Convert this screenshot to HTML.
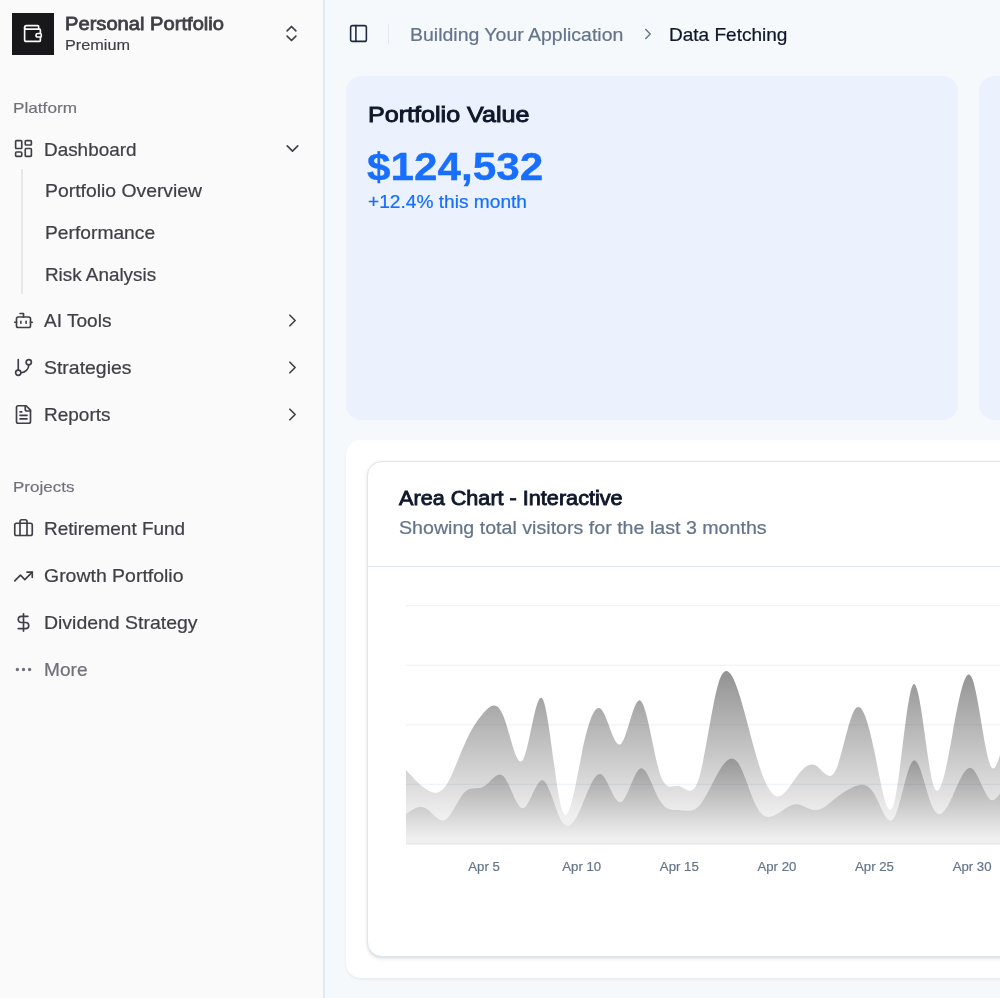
<!DOCTYPE html>
<html><head><meta charset="utf-8">
<style>
*{box-sizing:border-box;margin:0;padding:0}
html,body{width:1000px;height:998px;overflow:hidden}
body{font-family:"Liberation Sans",sans-serif;background:#f6f9fc;position:relative;color:#3f3f46}
.abs{position:absolute;white-space:nowrap;line-height:1}
#sidebar{position:absolute;left:0;top:0;width:325px;height:998px;background:#fafafa;border-right:2px solid #e5eaf2}
.t{position:absolute;white-space:nowrap;line-height:20px;height:20px}
.nav{font-size:17.6px;color:#3f3f46;left:44px}
.sub{font-size:17.6px;color:#3f3f46;left:45.5px}
.lbl{font-size:15.2px;color:#71717a;left:13px}
svg.ic{position:absolute;overflow:visible;fill:none;stroke:#3f3f46;stroke-width:1.9;stroke-linecap:round;stroke-linejoin:round}
#root{position:absolute;left:0;top:0;width:1000px;height:998px;overflow:hidden;will-change:transform}
</style></head><body><div id="root">
<div id="sidebar">
  <div class="abs" style="left:12px;top:13px;width:42px;height:42px;background:#18181b"></div>
  <svg class="ic" style="left:21.6px;top:22.5px;stroke:#fafafa" width="21" height="21" viewBox="0 0 24 24"><path d="M19 7V4a1 1 0 0 0-1-1H5a2 2 0 0 0 0 4h15a1 1 0 0 1 1 1v4h-3a2 2 0 0 0 0 4h3a1 1 0 0 0 1-1v-2a1 1 0 0 0-1-1"/><path d="M3 5v14a2 2 0 0 0 2 2h15a1 1 0 0 0 1-1v-4"/></svg>
  <svg class="ic" style="left:281px;top:23px" width="21" height="21" viewBox="0 0 24 24"><path d="m7 15 5 5 5-5"/><path d="m7 9 5-5 5 5"/></svg>
  <svg class="ic" style="left:13px;top:137.7px" width="21" height="21" viewBox="0 0 24 24"><rect width="7" height="9" x="3" y="3" rx="1"/><rect width="7" height="5" x="14" y="3" rx="1"/><rect width="7" height="9" x="14" y="12" rx="1"/><rect width="7" height="5" x="3" y="16" rx="1"/></svg>
  <svg class="ic" style="left:281.5px;top:138px" width="21" height="21" viewBox="0 0 24 24"><path d="m6 9 6 6 6-6"/></svg>
  <div class="abs" style="left:21.3px;top:168.7px;width:1.3px;height:125.5px;background:#e5e7eb"></div>

  <svg class="ic" style="left:13px;top:309.5px" width="21" height="21" viewBox="0 0 24 24"><path d="M12 8V4H8"/><rect width="16" height="12" x="4" y="8" rx="2"/><path d="M2 14h2"/><path d="M20 14h2"/><path d="M15 13v2"/><path d="M9 13v2"/></svg>
  <svg class="ic" style="left:281.5px;top:309.5px" width="21" height="21" viewBox="0 0 24 24"><path d="m9 18 6-6-6-6"/></svg>

  <svg class="ic" style="left:13px;top:356.5px" width="21" height="21" viewBox="0 0 24 24"><line x1="6" x2="6" y1="3" y2="15"/><circle cx="18" cy="6" r="3"/><circle cx="6" cy="18" r="3"/><path d="M18 9a9 9 0 0 1-9 9"/></svg>
  <svg class="ic" style="left:281.5px;top:356.5px" width="21" height="21" viewBox="0 0 24 24"><path d="m9 18 6-6-6-6"/></svg>

  <svg class="ic" style="left:13px;top:403.5px" width="21" height="21" viewBox="0 0 24 24"><path d="M15 2H6a2 2 0 0 0-2 2v16a2 2 0 0 0 2 2h12a2 2 0 0 0 2-2V7Z"/><path d="M14 2v4a2 2 0 0 0 2 2h4"/><path d="M10 9H8"/><path d="M16 13H8"/><path d="M16 17H8"/></svg>
  <svg class="ic" style="left:281.5px;top:403.5px" width="21" height="21" viewBox="0 0 24 24"><path d="m9 18 6-6-6-6"/></svg>
  <svg class="ic" style="left:13px;top:518px" width="21" height="21" viewBox="0 0 24 24"><path d="M16 20V4a2 2 0 0 0-2-2h-4a2 2 0 0 0-2 2v16"/><rect width="20" height="14" x="2" y="6" rx="2"/></svg>
  <svg class="ic" style="left:13px;top:565.7px" width="21" height="21" viewBox="0 0 24 24"><polyline points="22 7 13.5 15.5 8.5 10.5 2 17"/><polyline points="16 7 22 7 22 13"/></svg>
  <svg class="ic" style="left:13px;top:612px" width="21" height="21" viewBox="0 0 24 24"><line x1="12" x2="12" y1="2" y2="22"/><path d="M17 5H9.500a3.500 3.500 0 0 0 0 7h5a3.500 3.500 0 0 1 0 7H6"/></svg>
  <svg class="ic" style="left:13px;top:659px;stroke:#71717a" width="21" height="21" viewBox="0 0 24 24"><circle cx="12" cy="12" r="1"/><circle cx="19" cy="12" r="1"/><circle cx="5" cy="12" r="1"/></svg>
</div>

<!-- header -->
<svg class="ic" style="left:348.1px;top:23px;stroke:#1e293b;stroke-width:1.8" width="21" height="21" viewBox="0 0 24 24"><rect width="18" height="18" x="3" y="3" rx="2"/><path d="M9 3v18"/></svg>
<div class="abs" style="left:387.5px;top:23.8px;width:1.3px;height:20.4px;background:#e4e9f1"></div>
<svg class="ic" style="left:638.5px;top:24.5px;stroke:#64748b" width="18" height="18" viewBox="0 0 24 24"><path d="m9 18 6-6-6-6"/></svg>

<!-- cards -->
<div class="abs" style="left:346px;top:76px;width:612px;height:343.5px;border-radius:15px;background:#ebf2fd"></div>
<div class="abs" style="left:978.5px;top:76px;width:612px;height:343.5px;border-radius:15px;background:#ebf2fd"></div>

<!-- chart container -->
<div class="abs" style="left:346px;top:440px;width:1900px;height:538px;border-radius:15px;background:#fff;box-shadow:0 1.3px 2.6px rgba(0,0,0,.05)"></div>
<div class="abs" style="left:367px;top:461.4px;width:1860px;height:496px;border-radius:15px;background:#fff;border:1.3px solid #dfe6ef;box-shadow:0 1.3px 3.9px rgba(0,0,0,.1),0 1.3px 2.6px -1.3px rgba(0,0,0,.1)"></div>
<div class="abs" style="left:368px;top:566px;width:1860px;height:1.3px;background:#dde5ee"></div>

<svg class="abs" style="left:0;top:0" width="1000" height="998" viewBox="0 0 1000 998">
  <defs>
    <linearGradient id="gd" x1="0" y1="0" x2="0" y2="1"><stop offset="5%" stop-color="#000" stop-opacity="0.8"/><stop offset="95%" stop-color="#000" stop-opacity="0.1"/></linearGradient>
    <linearGradient id="gm" x1="0" y1="0" x2="0" y2="1"><stop offset="5%" stop-color="#000" stop-opacity="0.8"/><stop offset="95%" stop-color="#000" stop-opacity="0.1"/></linearGradient>
  </defs>
  <g stroke="#e2e8f0" stroke-opacity="0.5" stroke-width="1.3">
    <line x1="406" x2="1000" y1="605.7" y2="605.7"/>
    <line x1="406" x2="1000" y1="665.3" y2="665.3"/>
    <line x1="406" x2="1000" y1="724.8" y2="724.8"/>
    <line x1="406" x2="1000" y1="784.4" y2="784.4"/>
    <line x1="406" x2="1000" y1="844.0" y2="844.0"/>
  </g>
  <path d="M406.00,814.09C412.51,809.37,419.01,804.66,425.52,808.12C432.03,811.59,438.53,823.23,445.04,820.05C451.55,816.87,458.05,798.88,464.56,792.23C471.07,785.57,477.57,790.25,484.08,786.26C490.59,782.27,497.09,769.61,503.60,776.32C510.11,783.04,516.61,809.12,523.12,808.12C529.63,807.13,536.13,779.06,542.64,780.30C549.15,781.54,555.65,812.08,562.16,822.04C568.67,831.99,575.17,821.35,581.68,806.14C588.19,790.92,594.69,771.13,601.20,774.34C607.71,777.54,614.21,803.74,620.72,802.16C627.23,800.59,633.73,771.24,640.24,768.38C646.75,765.51,653.25,789.12,659.76,800.17C666.27,811.23,672.77,809.72,679.28,810.11C685.79,810.51,692.29,812.80,698.80,806.14C705.31,799.47,711.81,783.84,718.32,772.35C724.83,760.86,731.33,753.52,737.84,762.41C744.35,771.31,750.85,796.45,757.36,808.12C763.87,819.80,770.37,818.01,776.88,814.09C783.39,810.17,789.89,804.12,796.40,804.15C802.91,804.18,809.41,810.28,815.92,810.11C822.43,809.94,828.93,803.49,835.44,798.19C841.95,792.88,848.45,788.72,854.96,786.26C861.47,783.80,867.97,783.04,874.48,794.21C880.99,805.39,887.49,828.50,894.00,818.06C900.51,807.62,907.01,763.63,913.52,760.42C920.03,757.22,926.53,794.81,933.04,808.12C939.55,821.44,946.05,810.48,952.56,796.20C959.07,781.92,965.57,764.30,972.08,768.38C978.59,772.45,985.09,798.21,991.60,800.17C998.11,802.14,1004.61,780.30,1011.12,782.29C1017.63,784.27,1024.13,810.07,1030.64,806.14C1037.15,802.20,1043.65,768.53,1050.16,760.42C1056.67,752.32,1063.17,769.79,1069.68,766.39C1076.19,762.99,1082.69,738.72,1089.20,740.55C1095.71,742.38,1102.21,770.32,1108.72,784.27C1115.23,798.23,1121.73,798.19,1128.24,802.16C1134.75,806.13,1141.25,814.11,1147.76,808.12C1154.27,802.14,1160.77,782.18,1167.28,778.31C1173.79,774.45,1180.29,786.68,1186.80,790.24C1193.31,793.79,1199.81,788.67,1206.32,796.20C1212.83,803.73,1219.33,823.91,1225.84,812.10C1232.35,800.29,1238.85,756.50,1245.36,746.51C1251.87,736.53,1258.37,760.36,1264.88,768.38C1271.39,776.39,1277.89,768.60,1284.40,764.40C1290.91,760.20,1297.41,759.61,1303.92,760.42C1310.43,761.24,1316.93,763.48,1323.44,774.34C1329.95,785.19,1336.45,804.67,1342.96,808.12C1349.47,811.58,1355.97,799.02,1362.48,798.19C1368.99,797.35,1375.49,808.25,1382.00,816.07C1388.51,823.90,1395.01,828.66,1401.52,820.05C1408.03,811.44,1414.53,789.48,1421.04,786.26C1427.55,783.05,1434.05,798.58,1440.56,800.17C1447.07,801.77,1453.57,789.41,1460.08,794.21C1466.59,799.02,1473.09,820.98,1479.60,810.11C1486.11,799.24,1492.61,755.54,1499.12,752.47C1505.63,749.41,1512.13,786.97,1518.64,806.14C1525.15,825.30,1531.65,826.07,1538.16,818.06C1544.67,810.06,1551.17,793.29,1557.68,788.25C1564.19,783.21,1570.69,789.89,1577.20,798.19C1583.71,806.48,1590.21,816.38,1596.72,804.15C1603.23,791.92,1609.73,757.55,1616.24,762.41C1622.75,767.28,1629.25,811.37,1635.76,812.10C1642.27,812.83,1648.77,770.20,1655.28,768.38C1661.79,766.55,1668.29,805.53,1674.80,816.07C1681.31,826.62,1687.81,808.72,1694.32,794.21C1700.83,779.70,1707.33,768.57,1713.84,770.36C1720.35,772.15,1726.85,786.87,1733.36,780.30C1739.87,773.73,1746.37,745.89,1752.88,748.50C1759.39,751.11,1765.89,784.17,1772.40,804.15C1778.91,824.13,1785.41,831.03,1791.92,814.09C1798.43,797.14,1804.93,756.35,1811.44,760.42C1817.95,764.50,1824.45,813.43,1830.96,818.06C1837.47,822.70,1843.97,783.04,1850.48,768.38C1856.99,753.71,1863.49,764.03,1870.00,774.34C1876.51,784.64,1883.01,794.93,1889.52,782.29C1896.03,769.64,1902.53,734.07,1909.04,740.55C1915.55,747.03,1922.05,795.57,1928.56,810.11C1935.07,824.65,1941.57,805.20,1948.08,786.26C1954.59,767.33,1961.09,748.91,1967.60,754.46C1974.11,760.01,1980.61,789.53,1987.12,802.16C1993.63,814.79,2000.13,810.53,2006.64,790.24C2013.15,769.94,2019.65,733.62,2026.16,738.56C2032.67,743.51,2039.17,789.72,2045.68,808.12C2052.19,826.53,2058.69,817.11,2065.20,806.14C2071.71,795.16,2078.21,782.62,2084.72,768.38C2091.23,754.13,2097.73,738.16,2104.24,746.51C2110.75,754.86,2117.25,787.52,2123.76,804.15C2130.27,820.78,2136.77,821.40,2143.28,812.10C2149.79,802.80,2156.29,783.60,2162.80,764.40L2162.80,843.90L406.00,843.90Z" fill="url(#gm)" fill-opacity="0.6"/>
  <path d="M406.00,769.96C412.51,777.10,419.01,784.24,425.52,788.85C432.03,793.45,438.53,795.52,445.04,786.86C451.55,778.20,458.05,758.81,464.56,744.13C471.07,729.45,477.57,719.48,484.08,712.13C490.59,704.78,497.09,700.04,503.60,716.50C510.11,732.96,516.61,770.61,523.12,759.43C529.63,748.26,536.13,688.26,542.64,699.01C549.15,709.77,555.65,791.28,562.16,810.31C568.67,829.34,575.17,785.90,581.68,754.26C588.19,722.63,594.69,702.80,601.20,709.35C607.71,715.90,614.21,748.83,620.72,744.13C627.23,739.42,633.73,697.09,640.24,700.40C646.75,703.72,653.25,752.69,659.76,772.95C666.27,793.20,672.77,784.74,679.28,786.26C685.79,787.78,692.29,799.28,698.80,778.71C705.31,758.14,711.81,705.50,718.32,683.71C724.83,661.92,731.33,670.97,737.84,690.07C744.35,709.16,750.85,738.30,757.36,759.83C763.87,781.36,770.37,795.27,776.88,796.40C783.39,797.53,789.89,785.87,796.40,776.92C802.91,767.97,809.41,761.74,815.92,765.59C822.43,769.44,828.93,783.38,835.44,770.76C841.95,758.14,848.45,718.95,854.96,709.35C861.47,699.74,867.97,719.73,874.48,751.48C880.99,783.23,887.49,826.76,894.00,803.16C900.51,779.55,907.01,688.83,913.52,684.30C920.03,679.78,926.53,761.46,933.04,783.88C939.55,806.29,946.05,769.45,952.56,733.59C959.07,697.74,965.57,662.87,972.08,678.14C978.59,693.41,985.09,758.82,991.60,767.38C998.11,775.95,1004.61,727.67,1011.12,724.05C1017.63,720.44,1024.13,761.49,1030.64,757.05C1037.15,752.60,1043.65,702.67,1050.16,683.91C1056.67,665.14,1063.17,677.54,1069.68,670.79C1076.19,664.04,1082.69,638.14,1089.20,641.57C1095.71,645.01,1102.21,677.78,1108.72,707.16C1115.23,736.54,1121.73,762.54,1128.24,772.55C1134.75,782.55,1141.25,776.56,1147.76,763.01C1154.27,749.45,1160.77,728.34,1167.28,720.08C1173.79,711.82,1180.29,716.43,1186.80,723.66C1193.31,730.89,1199.81,740.74,1206.32,757.05C1212.83,773.35,1219.33,796.10,1225.84,772.95C1232.35,749.79,1238.85,680.74,1245.36,657.47C1251.87,634.20,1258.37,656.71,1264.88,674.37C1271.39,692.02,1277.89,704.81,1284.40,697.22C1290.91,689.63,1297.41,661.66,1303.92,661.25C1310.43,660.84,1316.93,688.00,1323.44,711.73C1329.95,735.46,1336.45,755.76,1342.96,761.42C1349.47,767.07,1355.97,758.08,1362.48,763.01C1368.99,767.94,1375.49,786.79,1382.00,799.78C1388.51,812.77,1395.01,819.89,1401.52,803.95C1408.03,788.01,1414.53,749.00,1421.04,736.18C1427.55,723.36,1434.05,736.74,1440.56,741.74C1447.07,746.75,1453.57,743.38,1460.08,754.26C1466.59,765.15,1473.09,790.28,1479.60,767.78C1486.11,745.28,1492.61,675.14,1499.12,669.00C1505.63,662.86,1512.13,720.74,1518.64,759.83C1525.15,798.92,1531.65,819.24,1538.16,802.56C1544.67,785.88,1551.17,732.21,1557.68,720.67C1564.19,709.14,1570.69,739.74,1577.20,762.81C1583.71,785.88,1590.21,801.43,1596.72,768.77C1603.23,736.12,1609.73,655.27,1616.24,669.00C1622.75,682.73,1629.25,791.06,1635.76,791.63C1642.27,792.20,1648.77,685.02,1655.28,681.12C1661.79,677.23,1668.29,776.61,1674.80,798.59C1681.31,820.56,1687.81,765.13,1694.32,735.78C1700.83,706.43,1707.33,703.17,1713.84,706.17C1720.35,709.16,1726.85,718.41,1733.36,703.78C1739.87,689.15,1746.37,650.63,1752.88,661.45C1759.39,672.27,1765.89,732.42,1772.40,773.34C1778.91,814.26,1785.41,835.95,1791.92,795.80C1798.43,755.66,1804.93,653.69,1811.44,662.64C1817.95,671.59,1824.45,791.46,1830.96,801.96C1837.47,812.47,1843.97,713.62,1850.48,683.71C1856.99,653.80,1863.49,692.82,1870.00,713.32C1876.51,733.82,1883.01,735.79,1889.52,708.55C1896.03,681.32,1902.53,624.88,1909.04,646.14C1915.55,667.40,1922.05,766.36,1928.56,788.85C1935.07,811.33,1941.57,757.35,1948.08,718.49C1954.59,679.63,1961.09,655.89,1967.60,673.37C1974.11,690.85,1980.61,749.55,1987.12,768.57C1993.63,787.59,2000.13,766.93,2006.64,727.23C2013.15,687.53,2019.65,628.79,2026.16,643.16C2032.67,657.53,2039.17,745.01,2045.68,781.89C2052.19,818.77,2058.69,805.04,2065.20,778.11C2071.71,751.18,2078.21,711.05,2084.72,682.12C2091.23,653.19,2097.73,635.47,2104.24,657.47C2110.75,679.48,2117.25,741.20,2123.76,774.54C2130.27,807.87,2136.77,812.82,2143.28,791.63C2149.79,770.43,2156.29,723.10,2162.80,675.76L2162.80,764.40C2156.29,783.60,2149.79,802.80,2143.28,812.10C2136.77,821.40,2130.27,820.78,2123.76,804.15C2117.25,787.52,2110.75,754.86,2104.24,746.51C2097.73,738.16,2091.23,754.13,2084.72,768.38C2078.21,782.62,2071.71,795.16,2065.20,806.14C2058.69,817.11,2052.19,826.53,2045.68,808.12C2039.17,789.72,2032.67,743.51,2026.16,738.56C2019.65,733.62,2013.15,769.94,2006.64,790.24C2000.13,810.53,1993.63,814.79,1987.12,802.16C1980.61,789.53,1974.11,760.01,1967.60,754.46C1961.09,748.91,1954.59,767.33,1948.08,786.26C1941.57,805.20,1935.07,824.65,1928.56,810.11C1922.05,795.57,1915.55,747.03,1909.04,740.55C1902.53,734.07,1896.03,769.64,1889.52,782.29C1883.01,794.93,1876.51,784.64,1870.00,774.34C1863.49,764.03,1856.99,753.71,1850.48,768.38C1843.97,783.04,1837.47,822.70,1830.96,818.06C1824.45,813.43,1817.95,764.50,1811.44,760.42C1804.93,756.35,1798.43,797.14,1791.92,814.09C1785.41,831.03,1778.91,824.13,1772.40,804.15C1765.89,784.17,1759.39,751.11,1752.88,748.50C1746.37,745.89,1739.87,773.73,1733.36,780.30C1726.85,786.87,1720.35,772.15,1713.84,770.36C1707.33,768.57,1700.83,779.70,1694.32,794.21C1687.81,808.72,1681.31,826.62,1674.80,816.07C1668.29,805.53,1661.79,766.55,1655.28,768.38C1648.77,770.20,1642.27,812.83,1635.76,812.10C1629.25,811.37,1622.75,767.28,1616.24,762.41C1609.73,757.55,1603.23,791.92,1596.72,804.15C1590.21,816.38,1583.71,806.48,1577.20,798.19C1570.69,789.89,1564.19,783.21,1557.68,788.25C1551.17,793.29,1544.67,810.06,1538.16,818.06C1531.65,826.07,1525.15,825.30,1518.64,806.14C1512.13,786.97,1505.63,749.41,1499.12,752.47C1492.61,755.54,1486.11,799.24,1479.60,810.11C1473.09,820.98,1466.59,799.02,1460.08,794.21C1453.57,789.41,1447.07,801.77,1440.56,800.17C1434.05,798.58,1427.55,783.05,1421.04,786.26C1414.53,789.48,1408.03,811.44,1401.52,820.05C1395.01,828.66,1388.51,823.90,1382.00,816.07C1375.49,808.25,1368.99,797.35,1362.48,798.19C1355.97,799.02,1349.47,811.58,1342.96,808.12C1336.45,804.67,1329.95,785.19,1323.44,774.34C1316.93,763.48,1310.43,761.24,1303.92,760.42C1297.41,759.61,1290.91,760.20,1284.40,764.40C1277.89,768.60,1271.39,776.39,1264.88,768.38C1258.37,760.36,1251.87,736.53,1245.36,746.51C1238.85,756.50,1232.35,800.29,1225.84,812.10C1219.33,823.91,1212.83,803.73,1206.32,796.20C1199.81,788.67,1193.31,793.79,1186.80,790.24C1180.29,786.68,1173.79,774.45,1167.28,778.31C1160.77,782.18,1154.27,802.14,1147.76,808.12C1141.25,814.11,1134.75,806.13,1128.24,802.16C1121.73,798.19,1115.23,798.23,1108.72,784.27C1102.21,770.32,1095.71,742.38,1089.20,740.55C1082.69,738.72,1076.19,762.99,1069.68,766.39C1063.17,769.79,1056.67,752.32,1050.16,760.42C1043.65,768.53,1037.15,802.20,1030.64,806.14C1024.13,810.07,1017.63,784.27,1011.12,782.29C1004.61,780.30,998.11,802.14,991.60,800.17C985.09,798.21,978.59,772.45,972.08,768.38C965.57,764.30,959.07,781.92,952.56,796.20C946.05,810.48,939.55,821.44,933.04,808.12C926.53,794.81,920.03,757.22,913.52,760.42C907.01,763.63,900.51,807.62,894.00,818.06C887.49,828.50,880.99,805.39,874.48,794.21C867.97,783.04,861.47,783.80,854.96,786.26C848.45,788.72,841.95,792.88,835.44,798.19C828.93,803.49,822.43,809.94,815.92,810.11C809.41,810.28,802.91,804.18,796.40,804.15C789.89,804.12,783.39,810.17,776.88,814.09C770.37,818.01,763.87,819.80,757.36,808.12C750.85,796.45,744.35,771.31,737.84,762.41C731.33,753.52,724.83,760.86,718.32,772.35C711.81,783.84,705.31,799.47,698.80,806.14C692.29,812.80,685.79,810.51,679.28,810.11C672.77,809.72,666.27,811.23,659.76,800.17C653.25,789.12,646.75,765.51,640.24,768.38C633.73,771.24,627.23,800.59,620.72,802.16C614.21,803.74,607.71,777.54,601.20,774.34C594.69,771.13,588.19,790.92,581.68,806.14C575.17,821.35,568.67,831.99,562.16,822.04C555.65,812.08,549.15,781.54,542.64,780.30C536.13,779.06,529.63,807.13,523.12,808.12C516.61,809.12,510.11,783.04,503.60,776.32C497.09,769.61,490.59,782.27,484.08,786.26C477.57,790.25,471.07,785.57,464.56,792.23C458.05,798.88,451.55,816.87,445.04,820.05C438.53,823.23,432.03,811.59,425.52,808.12C419.01,804.66,412.51,809.37,406.00,814.09Z" fill="url(#gd)" fill-opacity="0.6"/>
  <g font-family="Liberation Sans, sans-serif" font-size="13.2" fill="#64748b" stroke="#64748b" stroke-width="0.2" text-anchor="middle">
    <text x="484.1" y="871.3">Apr 5</text>
    <text x="581.7" y="871.3">Apr 10</text>
    <text x="679.3" y="871.3">Apr 15</text>
    <text x="776.9" y="871.3">Apr 20</text>
    <text x="874.5" y="871.3">Apr 25</text>
    <text x="972.1" y="871.3">Apr 30</text>
  </g>
</svg>
<div class="t" style="left:65px;top:11.69px;font-size:18.2px;line-height:24px;height:24px;font-weight:normal;color:#3f3f46;transform-origin:0 0;transform:scaleX(1.1075);-webkit-text-stroke:0.76px #3f3f46">Personal Portfolio</div>
<div class="t" style="left:65px;top:34.80px;font-size:15px;line-height:20px;height:20px;font-weight:normal;color:#3f3f46;transform-origin:0 0;transform:scaleX(1.0831);-webkit-text-stroke:0.18px #3f3f46">Premium</div>
<div class="t" style="left:13px;top:97.80px;font-size:15px;line-height:20px;height:20px;font-weight:normal;color:#71717a;transform-origin:0 0;transform:scaleX(1.1457);-webkit-text-stroke:0.18px #71717a">Platform</div>
<div class="t" style="left:43.5px;top:137.69px;font-size:18.2px;line-height:24px;height:24px;font-weight:normal;color:#3f3f46;transform-origin:0 0;transform:scaleX(1.0395);-webkit-text-stroke:0.22px #3f3f46">Dashboard</div>
<div class="t" style="left:44.9px;top:178.69px;font-size:18.2px;line-height:24px;height:24px;font-weight:normal;color:#3f3f46;transform-origin:0 0;transform:scaleX(1.0646);-webkit-text-stroke:0.22px #3f3f46">Portfolio Overview</div>
<div class="t" style="left:44.9px;top:220.69px;font-size:18.2px;line-height:24px;height:24px;font-weight:normal;color:#3f3f46;transform-origin:0 0;transform:scaleX(1.0575);-webkit-text-stroke:0.22px #3f3f46">Performance</div>
<div class="t" style="left:44.9px;top:262.69px;font-size:18.2px;line-height:24px;height:24px;font-weight:normal;color:#3f3f46;transform-origin:0 0;transform:scaleX(1.0370);-webkit-text-stroke:0.22px #3f3f46">Risk Analysis</div>
<div class="t" style="left:43.5px;top:308.69px;font-size:18.2px;line-height:24px;height:24px;font-weight:normal;color:#3f3f46;transform-origin:0 0;transform:scaleX(1.0485);-webkit-text-stroke:0.22px #3f3f46">AI Tools</div>
<div class="t" style="left:43.5px;top:355.69px;font-size:18.2px;line-height:24px;height:24px;font-weight:normal;color:#3f3f46;transform-origin:0 0;transform:scaleX(1.0685);-webkit-text-stroke:0.22px #3f3f46">Strategies</div>
<div class="t" style="left:43.5px;top:402.69px;font-size:18.2px;line-height:24px;height:24px;font-weight:normal;color:#3f3f46;transform-origin:0 0;transform:scaleX(1.0442);-webkit-text-stroke:0.22px #3f3f46">Reports</div>
<div class="t" style="left:13px;top:477.30px;font-size:15px;line-height:20px;height:20px;font-weight:normal;color:#71717a;transform-origin:0 0;transform:scaleX(1.1331);-webkit-text-stroke:0.18px #71717a">Projects</div>
<div class="t" style="left:43.5px;top:516.69px;font-size:18.2px;line-height:24px;height:24px;font-weight:normal;color:#3f3f46;transform-origin:0 0;transform:scaleX(1.0416);-webkit-text-stroke:0.22px #3f3f46">Retirement Fund</div>
<div class="t" style="left:43.5px;top:563.69px;font-size:18.2px;line-height:24px;height:24px;font-weight:normal;color:#3f3f46;transform-origin:0 0;transform:scaleX(1.0697);-webkit-text-stroke:0.22px #3f3f46">Growth Portfolio</div>
<div class="t" style="left:43.5px;top:610.69px;font-size:18.2px;line-height:24px;height:24px;font-weight:normal;color:#3f3f46;transform-origin:0 0;transform:scaleX(1.0692);-webkit-text-stroke:0.22px #3f3f46">Dividend Strategy</div>
<div class="t" style="left:43.5px;top:657.69px;font-size:18.2px;line-height:24px;height:24px;font-weight:normal;color:#71717a;transform-origin:0 0;transform:scaleX(1.0498);-webkit-text-stroke:0.22px #71717a">More</div>
<div class="t" style="left:410px;top:22.69px;font-size:18.2px;line-height:24px;height:24px;font-weight:normal;color:#64748b;transform-origin:0 0;transform:scaleX(1.0707);-webkit-text-stroke:0.22px #64748b">Building Your Application</div>
<div class="t" style="left:669px;top:22.69px;font-size:18.2px;line-height:24px;height:24px;font-weight:normal;color:#0f172a;transform-origin:0 0;transform:scaleX(1.0456);-webkit-text-stroke:0.22px #0f172a">Data Fetching</div>
<div class="t" style="left:367.5px;top:100.17px;font-size:22.6px;line-height:29px;height:29px;font-weight:normal;color:#0f172a;transform-origin:0 0;transform:scaleX(1.1116);-webkit-text-stroke:0.95px #0f172a">Portfolio Value</div>
<div class="t" style="left:367px;top:141.49px;font-size:39px;line-height:51px;height:51px;font-weight:bold;color:#176eff;transform-origin:0 0;transform:scaleX(1.0838);-webkit-text-stroke:0.35px #176eff">$124,532</div>
<div class="t" style="left:367.5px;top:189.69px;font-size:18.2px;line-height:24px;height:24px;font-weight:normal;color:#176eff;transform-origin:0 0;transform:scaleX(1.0519);-webkit-text-stroke:0.22px #176eff">+12.4% this month</div>
<div class="t" style="left:399.4px;top:485.43px;font-size:20.4px;line-height:27px;height:27px;font-weight:normal;color:#0f172a;transform-origin:0 0;transform:scaleX(1.0608);-webkit-text-stroke:0.86px #0f172a">Area Chart - Interactive</div>
<div class="t" style="left:399.4px;top:515.69px;font-size:18.2px;line-height:24px;height:24px;font-weight:normal;color:#64748b;transform-origin:0 0;transform:scaleX(1.0791);-webkit-text-stroke:0.22px #64748b">Showing total visitors for the last 3 months</div>
</div></body></html>
